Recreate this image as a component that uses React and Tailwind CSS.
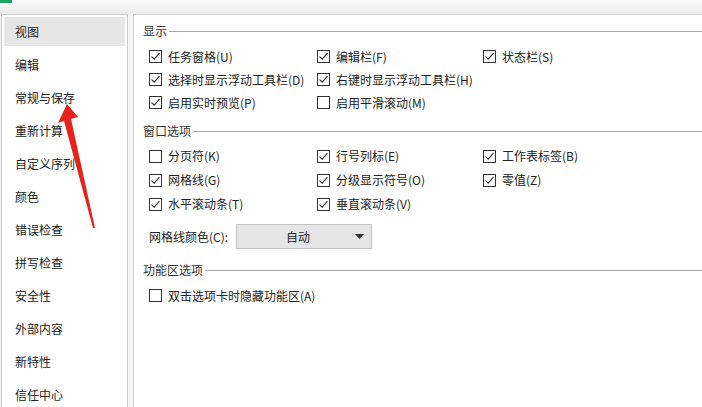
import React from 'react';

const font = { fontFamily: '"Microsoft YaHei", "Noto Sans CJK SC", "Noto Sans", sans-serif' };

const navItems = ['视图', '编辑', '常规与保存', '重新计算', '自定义序列', '颜色', '错误检查', '拼写检查', '安全性', '外部内容', '新特性', '信任中心'];

function Check({ checked, label, h = 'h-[23px]' }) {
  return (
    <div className={`flex items-center ${h}`}>
      <span className="w-[13px] h-[13px] border border-[#333] bg-white flex items-center justify-center shrink-0">
        {checked && (
          <svg width="11" height="11" viewBox="0 0 11 11">
            <path d="M1.5 5.5 L4.2 8.2 L9.5 2.2" fill="none" stroke="#333" strokeWidth="1.1" />
          </svg>
        )}
      </span>
      <span className="ml-[6px] text-[12px] text-[#222] whitespace-nowrap">{label}</span>
    </div>
  );
}

function Section({ title, children }) {
  return (
    <div>
      <div className="flex items-center h-[20px]">
        <span className="text-[12px] text-[#333]">{title}</span>
        <div className="flex-1 h-px bg-[#a8a8a8] ml-[2px]" />
      </div>
      <div className="pl-[6px]">{children}</div>
    </div>
  );
}

function Row({ items, h }) {
  return (
    <div className="flex">
      <div className="w-[168px]"><Check checked={items[0][1]} label={items[0][0]} h={h} /></div>
      <div className="w-[166px]"><Check checked={items[1][1]} label={items[1][0]} h={h} /></div>
      {items[2] && <div><Check checked={items[2][1]} label={items[2][0]} h={h} /></div>}
    </div>
  );
}

export default function App() {
  return (
    <div className="relative w-[702px] h-[407px] overflow-hidden bg-[#f4f4f4]" style={font}>
      <div className="h-[14px] bg-gradient-to-b from-[#f9f9f9] to-[#ececec] relative">
        <div className="absolute left-0 top-0 w-[12px] h-[3px] bg-[#21a366]" />
      </div>
      <div className="flex h-[393px]">
        {/* left nav */}
        <div className="ml-[1px] w-[127px] bg-white border border-[#c9c9c9] border-b-0 pt-[2px] px-[2px] flex flex-col gap-[4px]">
          {navItems.map((n, i) => (
            <div
              key={n}
              className={`h-[29px] shrink-0 flex items-center pl-[11px] text-[12px] text-[#222] ${i === 0 ? 'bg-[#e6e6e6]' : ''}`}
            >
              {n}
            </div>
          ))}
        </div>
        {/* right panel */}
        <div className="ml-[5px] flex-1 bg-white border-l border-t border-[#d4d4d4] pl-[9px] pt-[6px]">
          <Section title="显示">
            <div className="pt-[4px]">
              <Row items={[['任务窗格(U)', true], ['编辑栏(F)', true], ['状态栏(S)', true]]} />
              <Row items={[['选择时显示浮动工具栏(D)', true], ['右键时显示浮动工具栏(H)', true]]} />
              <Row items={[['启用实时预览(P)', true], ['启用平滑滚动(M)', false]]} />
            </div>
          </Section>
          <div className="h-[7px]" />
          <Section title="窗口选项">
            <div className="pt-[3px]">
              <Row h="h-[24px]" items={[['分页符(K)', false], ['行号列标(E)', true], ['工作表标签(B)', true]]} />
              <Row h="h-[24px]" items={[['网格线(G)', true], ['分级显示符号(O)', true], ['零值(Z)', true]]} />
              <Row h="h-[24px]" items={[['水平滚动条(T)', true], ['垂直滚动条(V)', true]]} />
            </div>
            <div className="flex items-center mt-[8px]">
              <span className="text-[12px] text-[#222] w-[87px]">网格线颜色(C):</span>
              <div className="w-[136px] h-[25px] bg-[#e5e5e5] border border-[#c4c4c4] flex items-center">
                <span className="flex-1 text-center text-[12px] text-[#222] pl-[4px]">自动</span>
                <svg width="9" height="5" viewBox="0 0 9 5" className="mr-[7px]">
                  <path d="M0 0 H9 L4.5 5 Z" fill="#333" />
                </svg>
              </div>
            </div>
          </Section>
          <div className="h-[11px]" />
          <Section title="功能区选项">
            <div className="pt-[4px]">
              <Check checked={false} label="双击选项卡时隐藏功能区(A)" />
            </div>
          </Section>
        </div>
      </div>
      {/* red annotation arrow */}
      <svg className="absolute left-0 top-0 pointer-events-none" width="702" height="407">
        <polygon points="67,104 58,123 64,121 93,228 95,228 71,119 78,117" fill="#e5221c" />
      </svg>
    </div>
  );
}
